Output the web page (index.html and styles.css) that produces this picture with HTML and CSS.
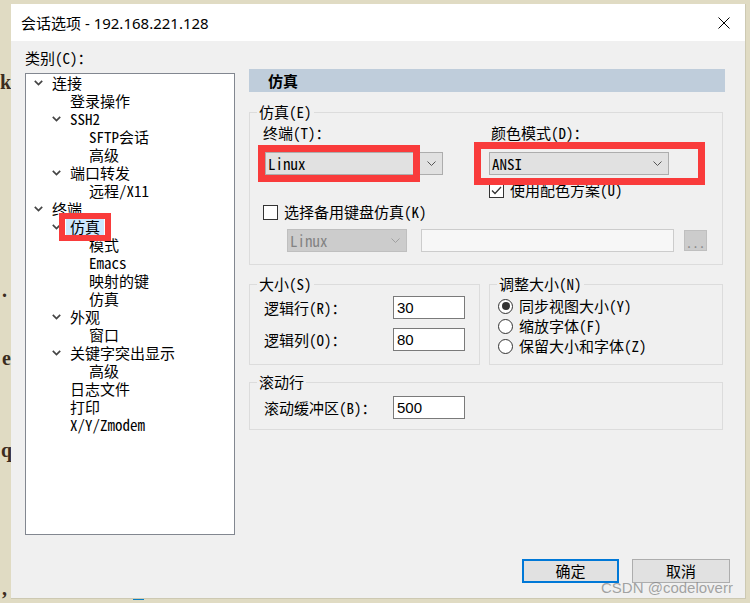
FILE: index.html
```html
<!DOCTYPE html>
<html lang="zh-CN">
<head>
    <meta charset="UTF-8">
    <meta name="viewport" content="width=device-width, initial-scale=1.0">
    <title>会话选项 - 192.168.221.128</title>
    <link rel="stylesheet" href="styles.css">
</head>
<body>

    <!-- terminal window behind the dialog -->
    <div class="behind">
        <span class="ch ch-k">k</span>
        <span class="ch ch-dot">.</span>
        <span class="ch ch-e">e</span>
        <span class="ch ch-q">q</span>
        <span class="ch ch-comma">,</span>
        <span class="task-mark"></span>
    </div>

    <div class="dialog">
        <div class="titlebar">
            <span class="title">会话选项 - 192.168.221.128</span>
            <svg class="close" width="12" height="12" viewBox="0 0 12 12">
                <path d="M0.5 0.5L11.5 11.5M11.5 0.5L0.5 11.5" stroke="#000" stroke-width="1" fill="none"/>
            </svg>
        </div>

        <div class="main">
            <!-- Category tree -->
            <div class="left">
                <div class="cat-label">类别(C)：</div>
                <ul class="tree">
                    <li class="l0"><span class="exp"><svg width="9" height="6" viewBox="0 0 9 6"><polyline points="0.8,0.8 4.5,4.5 8.2,0.8"/></svg></span>连接</li>
                    <li class="l2">登录操作</li>
                    <li class="l1"><span class="exp"><svg width="9" height="6" viewBox="0 0 9 6"><polyline points="0.8,0.8 4.5,4.5 8.2,0.8"/></svg></span>SSH2</li>
                    <li class="l3">SFTP会话</li>
                    <li class="l3">高级</li>
                    <li class="l1"><span class="exp"><svg width="9" height="6" viewBox="0 0 9 6"><polyline points="0.8,0.8 4.5,4.5 8.2,0.8"/></svg></span>端口转发</li>
                    <li class="l3">远程/X11</li>
                    <li class="l0"><span class="exp"><svg width="9" height="6" viewBox="0 0 9 6"><polyline points="0.8,0.8 4.5,4.5 8.2,0.8"/></svg></span>终端</li>
                    <li class="l1"><span class="exp"><svg width="9" height="6" viewBox="0 0 9 6"><polyline points="0.8,0.8 4.5,4.5 8.2,0.8"/></svg></span><span class="selected">仿真</span></li>
                    <li class="l3">模式</li>
                    <li class="l3">Emacs</li>
                    <li class="l3">映射的键</li>
                    <li class="l3">仿真</li>
                    <li class="l1"><span class="exp"><svg width="9" height="6" viewBox="0 0 9 6"><polyline points="0.8,0.8 4.5,4.5 8.2,0.8"/></svg></span>外观</li>
                    <li class="l3">窗口</li>
                    <li class="l1"><span class="exp"><svg width="9" height="6" viewBox="0 0 9 6"><polyline points="0.8,0.8 4.5,4.5 8.2,0.8"/></svg></span>关键字突出显示</li>
                    <li class="l3">高级</li>
                    <li class="l2">日志文件</li>
                    <li class="l2">打印</li>
                    <li class="l2">X/Y/Zmodem</li>
                </ul>
            </div>

            <!-- Emulation page -->
            <div class="right">
                <div class="page-head">仿真</div>

                <fieldset class="group g-emu">
                    <legend>仿真(E)</legend>
                    <div class="gbody">
                        <div class="emu-top">
                            <div class="col">
                                <div class="lbl">终端(T)：</div>
                                <div class="combo combo-term marked">
                                    <span>Linux</span>
                                    <svg width="9" height="5" viewBox="0 0 9 5"><polyline points="0.5,0.5 4.5,4.5 8.5,0.5"/></svg>
                                </div>
                            </div>
                            <div class="col">
                                <div class="lbl">颜色模式(D)：</div>
                                <div class="combo combo-color marked">
                                    <span>ANSI</span>
                                    <svg width="9" height="5" viewBox="0 0 9 5"><polyline points="0.5,0.5 4.5,4.5 8.5,0.5"/></svg>
                                </div>
                                <div class="check check-color">
                                    <span class="box"><svg width="13" height="13" viewBox="0 0 13 13"><polyline points="2,6.5 5,9.5 11,3"/></svg></span>使用配色方案(U)
                                </div>
                            </div>
                        </div>
                        <div class="check check-kb"><span class="box"></span>选择备用键盘仿真(K)</div>
                        <div class="kb-row">
                            <div class="combo combo-kb disabled">
                                <span>Linux</span>
                                <svg width="9" height="5" viewBox="0 0 9 5"><polyline points="0.5,0.5 4.5,4.5 8.5,0.5"/></svg>
                            </div>
                            <div class="field-off"></div>
                            <div class="btn-more">...</div>
                        </div>
                    </div>
                </fieldset>

                <div class="row2">
                    <fieldset class="group">
                        <legend>大小(S)</legend>
                        <div class="gbody form-grid">
                            <span>逻辑行(R)：</span>
                            <div class="num">30</div>
                            <span>逻辑列(O)：</span>
                            <div class="num">80</div>
                        </div>
                    </fieldset>
                    <fieldset class="group">
                        <legend>调整大小(N)</legend>
                        <div class="gbody radios">
                            <div class="radio"><span class="dot on"></span>同步视图大小(Y)</div>
                            <div class="radio"><span class="dot"></span>缩放字体(F)</div>
                            <div class="radio"><span class="dot"></span>保留大小和字体(Z)</div>
                        </div>
                    </fieldset>
                </div>

                <fieldset class="group g-scroll">
                    <legend>滚动行</legend>
                    <div class="gbody form-grid">
                        <span>滚动缓冲区(B)：</span>
                        <div class="num">500</div>
                    </div>
                </fieldset>
            </div>
        </div>

        <div class="footer">
            <button class="btn btn-default">确定</button>
            <button class="btn">取消</button>
        </div>
    </div>

    <div class="watermark">CSDN @codeloverr</div>

</body>
</html>
```

FILE: styles.css
```css
*, *::before, *::after {
    box-sizing: border-box;
}
body {
    margin: 0;
    width: 750px;
    height: 603px;
    overflow: hidden;
    position: relative;
    background-color: #e0dbc3;
    font-family: "Noto Sans Mono CJK SC", "Liberation Mono", "Noto Sans CJK SC", monospace;
    font-size: 15px;
    line-height: 18px;
    color: #000;
}

/* window behind */
.ch {
    position: absolute;
    font-family: "Liberation Serif", serif;
    font-size: 20px;
    font-weight: bold;
    line-height: 20px;
    color: #3b2c20;
}
.ch-k { left: 0; top: 72px; }
.ch-dot { left: 2px; top: 280px; }
.ch-e { left: 2px; top: 348px; }
.ch-q { left: 1px; top: 440px; }
.ch-comma { left: 2px; top: 578px; }
.task-mark {
    position: absolute;
    left: 133px;
    top: 598px;
    width: 11px;
    height: 2px;
    background-color: #0a7ec2;
}

/* dialog */
.dialog {
    position: relative;
    margin: 4px 0 0 11px;
    width: 735px;
    height: 595px;
    background-color: #f0f0f0;
    border-right: 1px solid #cdc9b2;
    border-bottom: 1px solid #cdc9b2;
    display: flex;
    flex-direction: column;
}
.titlebar {
    height: 37px;
    background-color: #fff;
    display: flex;
    align-items: center;
    justify-content: space-between;
    padding: 0 15px 0 10px;
}
.title {
    font-family: "Noto Sans", "Noto Sans CJK SC", sans-serif;
    font-size: 15px;
}

.main {
    display: grid;
    grid-template-columns: 210px 476px;
    column-gap: 14px;
    padding: 8px 0 0 14px;
}

/* tree */
.cat-label {
    height: 18px;
}
.tree {
    list-style: none;
    margin: 6px 0 0 0;
    padding: 0;
    height: 462px;
    background-color: #fff;
    border: 1px solid #828790;
}
.tree li {
    height: 18px;
    display: flex;
    align-items: center;
    white-space: nowrap;
}
.tree .l0 { padding-left: 8px; }
.tree .l1 { padding-left: 26px; }
.tree .l2 { padding-left: 44px; }
.tree .l3 { padding-left: 63px; }
.exp {
    width: 18px;
    display: flex;
    align-items: center;
}
.exp svg polyline {
    fill: none;
    stroke: #444;
    stroke-width: 1.7;
}
.selected {
    position: relative;
    background-color: #cce8ff;
    height: 16px;
    line-height: 16px;
    padding: 0 4px;
    margin-left: -4px;
}
.selected::after,
.marked::after {
    content: "";
    position: absolute;
    border: 6px solid #f93b3b;
}
.selected::after {
    left: -7px;
    right: -7px;
    top: -6px;
    bottom: -6px;
}

/* right page */
.page-head {
    margin-top: 20px;
    height: 23px;
    line-height: 23px;
    padding-left: 19px;
    font-weight: bold;
    background-color: #bfcddb;
}
.group {
    margin: 0;
    padding: 0;
    min-width: 0;
    border: 1px solid #dcdcdc;
}
.group legend {
    margin-left: 7px;
    padding: 0 2px;
    line-height: 18px;
}
.g-emu {
    width: 474px;
    margin-top: 11px;
}
.g-emu .gbody {
    padding: 3px 0 12px 13px;
}
.emu-top {
    display: grid;
    grid-template-columns: 226px 1fr;
}
.col .lbl {
    height: 18px;
}
.col:last-child .lbl {
    padding-left: 2px;
}

.combo {
    position: relative;
    height: 23px;
    margin-top: 10px;
    padding: 0 6px 0 2px;
    display: flex;
    align-items: center;
    justify-content: space-between;
    background-color: #e1e1e1;
    border: 1px solid #adadad;
}
.combo svg polyline {
    fill: none;
    stroke: #555;
    stroke-width: 1;
}
.combo-term {
    width: 178px;
    margin-left: 2px;
}
.combo-term::after {
    left: -8px;
    top: -8px;
    width: 162px;
    height: 37px;
    border-width: 7px;
}
.combo-color {
    width: 180px;
}
.combo-color::after {
    left: -16px;
    top: -11px;
    width: 231px;
    height: 43px;
    border-width: 7px;
}
.combo.disabled {
    background-color: #cccccc;
    border-color: #bfbfbf;
    color: #838383;
}
.combo.disabled svg polyline {
    stroke: #a0a0a0;
}

.check {
    height: 18px;
    display: flex;
    align-items: center;
    gap: 6px;
}
.check .box {
    width: 15px;
    height: 15px;
    border: 1px solid #333;
    background-color: #fff;
    display: flex;
    align-items: center;
    justify-content: center;
}
.check .box polyline {
    fill: none;
    stroke: #333;
    stroke-width: 1.3;
}
.check-color {
    margin-top: 6px;
}
.check-kb {
    margin-top: 4px;
}
.kb-row {
    margin-top: 8px;
    display: flex;
    align-items: center;
}
.combo-kb {
    margin: 0 0 0 24px;
    width: 120px;
}
.field-off {
    margin-left: 14px;
    width: 253px;
    height: 23px;
    background-color: #f7f7f7;
    border: 1px solid #cccccc;
}
.btn-more {
    margin-left: 10px;
    width: 23px;
    height: 21px;
    background-color: #cccccc;
    border: 1px solid #bfbfbf;
    color: #838383;
    font-size: 13px;
    line-height: 24px;
    text-align: center;
    overflow: hidden;
}

.row2 {
    margin-top: 10px;
    width: 474px;
    display: grid;
    grid-template-columns: 231px 234px;
    column-gap: 9px;
}
.form-grid {
    display: grid;
    grid-template-columns: 129px 72px;
    row-gap: 9px;
    align-items: center;
    padding: 3px 0 13px 14px;
}
.num {
    height: 23px;
    padding-left: 3px;
    line-height: 21px;
    font-family: "Liberation Sans", sans-serif;
    background-color: #fff;
    border: 1px solid #7a7a7a;
}
.radios {
    padding: 3px 0 7px 8px;
}
.radio {
    height: 20px;
    display: flex;
    align-items: center;
    gap: 6px;
}
.dot {
    width: 15px;
    height: 15px;
    border: 1px solid #333;
    border-radius: 50%;
    background-color: #fff;
    display: flex;
    align-items: center;
    justify-content: center;
}
.dot.on::before {
    content: "";
    width: 8px;
    height: 8px;
    border-radius: 50%;
    background-color: #333;
}
.g-scroll {
    width: 474px;
    margin-top: 8px;
}
.g-scroll .form-grid {
    padding: 5px 0 10px 14px;
}

/* buttons */
.footer {
    margin-top: auto;
    display: flex;
    justify-content: flex-end;
    gap: 13px;
    padding: 0 15px 15px 0;
}
.btn {
    width: 98px;
    height: 24px;
    padding: 0;
    font-family: "Noto Sans CJK SC", sans-serif;
    font-size: 15px;
    line-height: 20px;
    color: #000;
    background-color: #e1e1e1;
    border: 1px solid #adadad;
}
.btn-default {
    width: 97px;
    border: 2px solid #0078d7;
}

.watermark {
    position: absolute;
    left: 601px;
    top: 579px;
    font-family: "Liberation Sans", sans-serif;
    font-size: 15px;
    line-height: 18px;
    color: rgba(135, 135, 135, 0.75);
}
```
